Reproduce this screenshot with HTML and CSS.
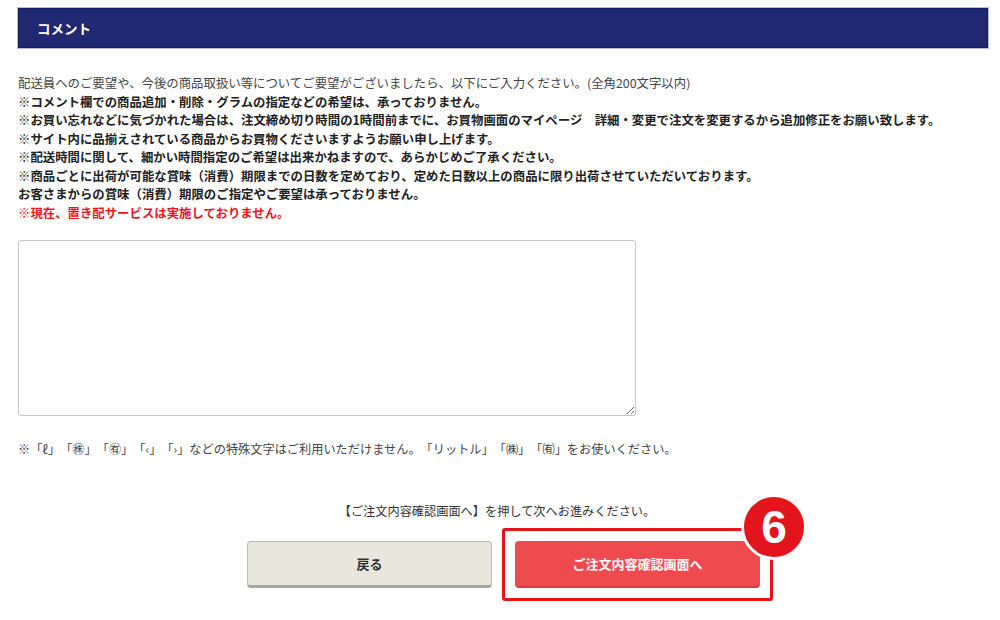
FILE: index.html
```html
<!DOCTYPE html>
<html lang="ja">
  <head>
    <meta charset="UTF-8" />
    <meta name="viewport" content="width=device-width, initial-scale=1.0" />
    <title>コメント</title>

    <link rel="stylesheet" href="styles.css">
  </head>

  <body>
    <div class="wrap">
      <h2 class="section-title">コメント</h2>

      <div class="notes">
        <p class="lead">配送員へのご要望や、今後の商品取扱い等についてご要望がございましたら、以下にご入力ください。(全角200文字以内)</p>
        <p>※コメント欄での商品追加・削除・グラムの指定などの希望は、承っておりません。</p>
        <p>※お買い忘れなどに気づかれた場合は、注文締め切り時間の1時間前までに、お買物画面のマイページ　詳細・変更で注文を変更するから追加修正をお願い致します。</p>
        <p>※サイト内に品揃えされている商品からお買物くださいますようお願い申し上げます。</p>
        <p>※配送時間に関して、細かい時間指定のご希望は出来かねますので、あらかじめご了承ください。</p>
        <p>※商品ごとに出荷が可能な賞味（消費）期限までの日数を定めており、定めた日数以上の商品に限り出荷させていただいております。</p>
        <p>お客さまからの賞味（消費）期限のご指定やご要望は承っておりません。</p>
        <p class="alert">※現在、置き配サービスは実施しておりません。</p>
      </div>

      <textarea class="comment" name="comment"></textarea>

      <p class="caution">※「ℓ」「㊑」「㊒」「‹」「›」などの特殊文字はご利用いただけません。「リットル」「㈱」「㈲」をお使いください。</p>

      <p class="guide">【ご注文内容確認画面へ】を押して次へお進みください。</p>

      <div class="actions">
        <button class="btn btn-back">戻る</button>
        <div class="highlight">
          <button class="btn btn-next">ご注文内容確認画面へ</button>
          <span class="step">6</span>
        </div>
      </div>
    </div>
  </body>
</html>
```

FILE: styles.css
```css
* {
  margin: 0;
  padding: 0;
  box-sizing: border-box;
  font-family: "Noto Sans CJK JP", "Noto Sans", sans-serif;
  text-spacing-trim: space-all;
}
body {
  background: #fff;
  color: #333;
}

.wrap {
  margin: 8px 12px 0 18px;
}

.section-title {
  height: 40px;
  padding-left: 18px;
  background: #1f2870;
  border: 1px solid #141b5c;
  box-shadow: 0 0 0 1px #b9bddb;
  color: #fff;
  font-size: 13.5px;
  font-weight: 700;
  line-height: 38px;
}

.notes {
  margin-top: 26px;
  font-size: 12.4px;
  line-height: 18.5px;
  font-weight: 700;
  color: #222;
}
.notes .lead {
  font-weight: 400;
  color: #444;
}
.notes .alert {
  color: #f0151b;
}

.comment {
  display: block;
  margin-top: 18px;
  width: 618px;
  height: 176px;
  border: 1px solid #c6c6c6;
  border-radius: 3px;
  resize: both;
}

.caution {
  margin-top: 24px;
  font-size: 12.2px;
  line-height: 18px;
  color: #444;
}

.guide {
  margin-top: 44px;
  padding-right: 12px;
  font-size: 12.2px;
  line-height: 18px;
  text-align: center;
  color: #333;
}

.actions {
  display: flex;
  align-items: center;
  justify-content: center;
  gap: 10px;
  margin-top: 8px;
  padding-left: 14px;
}

.btn {
  width: 245px;
  height: 47px;
  border-radius: 4px;
  font-size: 13px;
  font-weight: 700;
  cursor: pointer;
}
.btn-back {
  background: #e9e6dc;
  border: 1px solid #bdbab2;
  border-bottom: 3px solid #a9a69f;
  color: #333;
}
.btn-next {
  background: #ef4b4f;
  border: none;
  border-bottom: 2px solid #d93c40;
  color: #fff;
}

.highlight {
  position: relative;
  padding: 10px;
  border: 3px solid #e3141b;
  border-radius: 3px;
}

.step {
  position: absolute;
  top: -37px;
  right: -37px;
  width: 66px;
  height: 66px;
  border: 3px solid #fff;
  border-radius: 50%;
  background: #e3141b;
  color: #fff;
  font-family: "Liberation Sans", sans-serif;
  font-size: 46px;
  font-weight: 700;
  line-height: 60px;
  text-align: center;
}
```
